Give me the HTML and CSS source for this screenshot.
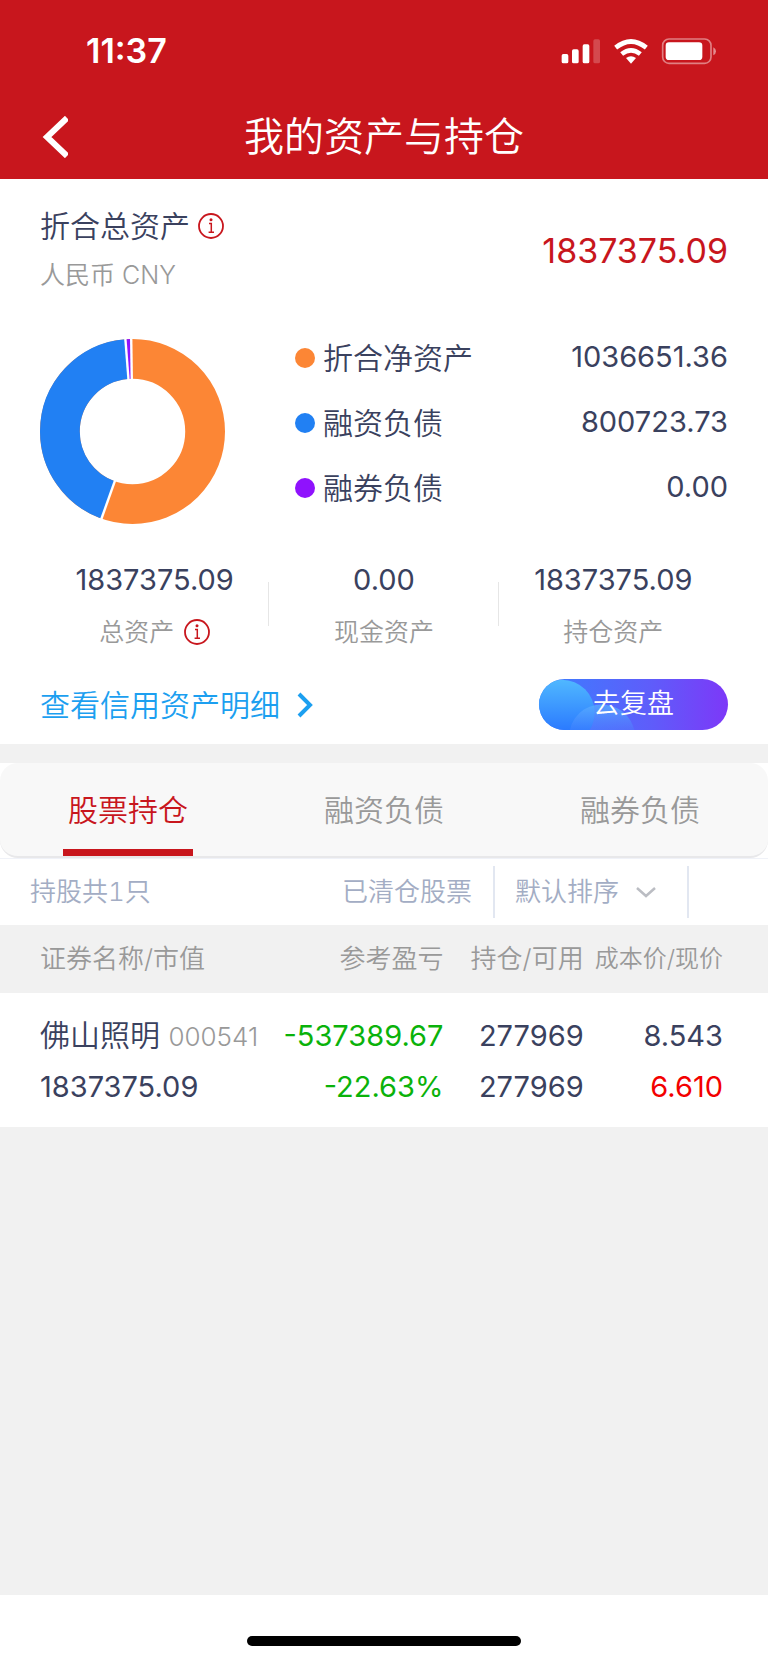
FILE: index.html
```html
<!DOCTYPE html>
<html lang="zh-CN">
<head>
<meta charset="utf-8">
<meta name="viewport" content="width=device-width, initial-scale=1">
<title>我的资产与持仓</title>
<link rel="stylesheet" href="styles.css">
</head>
<body>
<header class="top">
  <div class="status">
    <span class="status-time">11:37</span>
    <svg class="status-icons" viewBox="60 50 474 84" aria-hidden="true">
      <g fill="#fff">
        <rect x="65" y="101" width="20" height="28" rx="5"/>
        <rect x="96" y="87" width="20" height="42" rx="5"/>
        <rect x="128" y="72" width="20" height="57" rx="5"/>
        <rect x="160" y="57" width="20" height="72" rx="5" opacity=".22"/>
        <path d="M273 130 L258 113 Q273 102 288 113 Z"/>
        <rect x="377" y="66" width="110" height="53" rx="10"/>
      </g>
      <g fill="none" stroke="#fff" stroke-width="14">
        <path d="M245 101 Q273 79 301 101"/>
        <path d="M227 82 Q273 45 319 82"/>
      </g>
      <rect x="368" y="56" width="145" height="73" rx="19" fill="none" stroke="#fff" stroke-width="5" opacity=".45"/>
      <path d="M520 81 Q528 85 528 93 Q528 101 520 105 Z" fill="#fff" opacity=".5"/>
    </svg>
  </div>
  <div class="nav">
    <button class="back" type="button" aria-label="返回">
      <svg class="back-icon" viewBox="0 0 26 42" aria-hidden="true"><path d="M25 2 L5 21 L25 40" fill="none" stroke="#fff" stroke-width="6"/></svg>
    </button>
    <h1 class="title">我的资产与持仓</h1>
  </div>
</header>

<main class="main">
  <section class="assets">
    <div class="total">
      <div class="total-name">
        <div class="total-label">折合总资产
          <button class="info" type="button" aria-label="折合总资产说明">
            <svg class="info-icon" viewBox="0 0 26 26" aria-hidden="true"><circle cx="13" cy="13" r="12" fill="none" stroke="#c8161d" stroke-width="1.8"/><circle cx="13" cy="6.8" r="1.5" fill="#c8161d"/><path d="M11 10.5 H13.3 V19.3 M10.6 19.3 H16" fill="none" stroke="#c8161d" stroke-width="1.5"/></svg>
          </button>
        </div>
        <div class="currency">人民币 CNY</div>
      </div>
      <div class="total-value">1837375.09</div>
    </div>

    <div class="breakdown">
      <svg class="donut" viewBox="0 0 186 186" role="img" aria-label="资产构成">
        <g fill="none" stroke-width="40" transform="rotate(-90 93 93)">
          <circle cx="93" cy="93" r="73" stroke="#fc8635"/>
          <circle cx="93" cy="93" r="73" stroke="#2180f3" pathLength="360" stroke-dasharray="156 204" stroke-dashoffset="-199.6"/>
          <circle cx="93" cy="93" r="73" stroke="#8f12fd" pathLength="360" stroke-dasharray="3.6 356.4" stroke-dashoffset="-355.6"/>
        </g>
        <g stroke="#fff" stroke-width="2.4">
          <path d="M93 93 V-2" transform="rotate(-0.8 93 93)"/>
          <path d="M93 93 V-2" transform="rotate(-4.4 93 93)"/>
          <path d="M93 93 V-2" transform="rotate(199.6 93 93)"/>
        </g>
      </svg>
      <dl class="legend">
        <div class="legend-row"><dt class="legend-name net">折合净资产</dt><dd class="legend-value">1036651.36</dd></div>
        <div class="legend-row"><dt class="legend-name margin">融资负债</dt><dd class="legend-value">800723.73</dd></div>
        <div class="legend-row"><dt class="legend-name short">融券负债</dt><dd class="legend-value">0.00</dd></div>
      </dl>
    </div>

    <div class="stats">
      <div class="stat">
        <div class="stat-value">1837375.09</div>
        <div class="stat-label">总资产
          <button class="info" type="button" aria-label="总资产说明">
            <svg class="info-icon" viewBox="0 0 26 26" aria-hidden="true"><circle cx="13" cy="13" r="12" fill="none" stroke="#c8161d" stroke-width="1.8"/><circle cx="13" cy="6.8" r="1.5" fill="#c8161d"/><path d="M11 10.5 H13.3 V19.3 M10.6 19.3 H16" fill="none" stroke="#c8161d" stroke-width="1.5"/></svg>
          </button>
        </div>
      </div>
      <div class="stat">
        <div class="stat-value">0.00</div>
        <div class="stat-label">现金资产</div>
      </div>
      <div class="stat">
        <div class="stat-value">1837375.09</div>
        <div class="stat-label">持仓资产</div>
      </div>
    </div>

    <div class="actions">
      <a class="detail" href="#detail">查看信用资产明细
        <svg class="detail-icon" viewBox="0 0 16 26" aria-hidden="true"><path d="M2 2 L13 13 L2 24" fill="none" stroke="#1c9ff0" stroke-width="4"/></svg>
      </a>
      <button class="review" type="button">
        <svg class="review-art" viewBox="0 0 190 52" preserveAspectRatio="xMinYMid slice" aria-hidden="true">
          <defs>
            <linearGradient id="bubble" x1="0" y1="0" x2="0" y2="1"><stop offset="0" stop-color="#50b8ff"/><stop offset="1" stop-color="#2068ff"/></linearGradient>
            <linearGradient id="haze" x1="0" y1="0" x2="0" y2="1"><stop offset="0" stop-color="#58adff" stop-opacity=".8"/><stop offset="1" stop-color="#4e86ff" stop-opacity=".3"/></linearGradient>
          </defs>
          <circle cx="23" cy="34" r="33" fill="url(#bubble)"/>
          <path d="M31 52 A32 32 0 0 1 70 27 Q54 34 52 52 Z" fill="url(#haze)"/>
          <path d="M52 52 Q54 34 70 27 Q90 31 96 52 Z" fill="url(#haze)"/>
        </svg>
        <span class="review-text">去复盘</span>
      </button>
    </div>
  </section>

  <section class="holdings">
    <nav class="tabs">
      <a class="tab active" href="#stocks" aria-current="page">股票持仓</a>
      <a class="tab" href="#margin">融资负债</a>
      <a class="tab" href="#short">融券负债</a>
    </nav>
    <div class="filters">
      <span class="count">持股共1只</span>
      <a class="cleared" href="#cleared">已清仓股票</a>
      <button class="sort" type="button">默认排序
        <svg class="sort-icon" viewBox="0 0 22 12" aria-hidden="true"><path d="M2 2 L11 10 L20 2" fill="none" stroke="#bbbdc3" stroke-width="2.5"/></svg>
      </button>
    </div>
    <table class="table">
      <thead>
        <tr>
          <th class="c-name">证券名称/市值</th>
          <th class="c-profit">参考盈亏</th>
          <th class="c-amount">持仓/可用</th>
          <th class="c-price">成本价/现价</th>
        </tr>
      </thead>
      <tbody>
        <tr>
          <td class="c-name"><div class="name">佛山照明 <span class="code">000541</span></div><div>1837375.09</div></td>
          <td class="c-profit down"><div>-537389.67</div><div>-22.63%</div></td>
          <td class="c-amount"><div>277969</div><div>277969</div></td>
          <td class="c-price"><div>8.543</div><div class="up">6.610</div></td>
        </tr>
      </tbody>
    </table>
  </section>
</main>

<footer class="home"><div class="home-bar"></div></footer>
</body>
</html>
```

FILE: styles.css
```css
* {
  box-sizing: border-box;
  margin: 0;
  padding: 0;
}

body {
  display: flex;
  flex-direction: column;
  min-height: 100vh;
  background: #f1f1f1;
  color: #3a415e;
  font-family: Inter, "Noto Sans CJK SC", sans-serif;
  font-size: 30px;
  font-weight: 350;
  line-height: 1.2;
}

button {
  border: 0;
  background: none;
  color: inherit;
  font: inherit;
  cursor: pointer;
}

a {
  color: inherit;
  text-decoration: none;
}

svg {
  display: block;
  flex: none;
}

/* Header */
.top {
  background: #c8161d;
  color: #fff;
}

.status {
  display: flex;
  align-items: center;
  justify-content: space-between;
  height: 94px;
  padding: 8px 50px 0 86px;
}

.status-time {
  font-size: 34px;
  font-weight: 600;
}

.status-icons {
  width: 158px;
  height: 28px;
}

.nav {
  display: grid;
  grid-template-columns: 84px 1fr 84px;
  align-items: center;
  height: 85px;
}

.back {
  display: flex;
  padding-left: 42px;
}

.back-icon {
  width: 26px;
  height: 42px;
}

.title {
  font-size: 40px;
  font-weight: 350;
  text-align: center;
}

.main {
  flex: 1;
}

/* Asset summary */
.assets {
  padding: 24px 40px 14px;
  background: #fff;
}

.total {
  display: flex;
  align-items: center;
  justify-content: space-between;
}

.total-label {
  display: flex;
  align-items: center;
  gap: 8px;
  height: 46px;
}

.info {
  display: flex;
}

.info-icon {
  width: 26px;
  height: 26px;
}

.currency {
  height: 50px;
  color: #999;
  font-size: 25px;
  line-height: 52px;
}

.total-value {
  color: #c8161d;
  font-size: 34px;
  font-weight: 400;
}

.breakdown {
  display: flex;
  justify-content: space-between;
  margin-top: 40px;
}

.donut {
  width: 185px;
  height: 185px;
}

.legend {
  width: 433px;
  margin-top: -14px;
}

.legend-row {
  display: flex;
  align-items: center;
  justify-content: space-between;
  height: 65px;
}

.legend-name {
  display: flex;
  align-items: center;
  gap: 8px;
}

.legend-name::before {
  width: 20px;
  height: 20px;
  border-radius: 50%;
  background: currentColor;
  content: "";
}

.net::before {
  background: #fc8635;
}

.margin::before {
  background: #2180f3;
}

.short::before {
  background: #8f12fd;
}

.legend-value,
.stat-value {
  font-size: 29px;
  font-weight: 400;
}

.stats {
  display: grid;
  grid-template-columns: repeat(3, 1fr);
  margin-top: 34px;
}

.stat {
  display: flex;
  flex-direction: column;
  align-items: center;
  background: linear-gradient(#e6e6e6, #e6e6e6) no-repeat right 24px / 1px 44px;
}

.stat:last-child {
  background: none;
}

.stat-value {
  height: 44px;
  line-height: 44px;
}

.stat-label {
  display: flex;
  align-items: center;
  gap: 10px;
  height: 60px;
  color: #999;
  font-size: 25px;
}

.actions {
  display: flex;
  align-items: center;
  justify-content: space-between;
  margin-top: 17px;
}

.detail {
  display: flex;
  align-items: center;
  gap: 17px;
  color: #1c9ff0;
}

.detail-icon {
  width: 16px;
  height: 26px;
}

.review {
  display: grid;
  width: 189px;
  height: 51px;
  overflow: hidden;
  border-radius: 26px;
  background: linear-gradient(90deg, #3a80ff, #5f5cfa 60%, #7d38f8);
  color: #fff;
  font-size: 27px;
}

.review-art,
.review-text {
  grid-area: 1 / 1;
}

.review-art {
  width: 100%;
  height: 100%;
}

.review-text {
  align-self: center;
}

/* Holdings */
.holdings {
  margin-top: 19px;
  background: #fff;
}

.tabs {
  display: grid;
  grid-template-columns: repeat(3, 1fr);
  justify-items: center;
  height: 95px;
  border-bottom: 2px solid #e8e8ea;
  border-radius: 18px;
  background: #f8f8f8;
  color: #999;
}

.tab {
  display: flex;
  align-items: center;
  padding: 7px 5px 0;
  border-bottom: 7px solid transparent;
}

.active {
  border-color: #c8161d;
  color: #c8161d;
}

.filters {
  display: flex;
  align-items: center;
  height: 67px;
  padding: 0 79px 0 30px;
  border-top: 1px solid #f0f2f8;
  color: #a3adc4;
  font-size: 26px;
}

.count {
  font-variant-numeric: tabular-nums;
}

.cleared {
  margin-left: auto;
  padding-right: 21px;
}

.sort {
  display: flex;
  align-items: center;
  gap: 16px;
  height: 52px;
  padding: 0 30px 0 20px;
  border: solid #e2e7f1;
  border-width: 0 2px;
}

.sort-icon {
  width: 22px;
  height: 12px;
}

.table {
  width: 100%;
  border-collapse: collapse;
  table-layout: fixed;
}

.table th {
  height: 68px;
  background: #f1f1f1;
  color: #999;
  font-size: 26px;
  font-weight: 350;
  white-space: nowrap;
}

.table td {
  padding: 17px 0 15px;
  font-size: 29px;
  font-weight: 400;
  line-height: 51px;
  vertical-align: top;
  white-space: nowrap;
}

.table .c-name {
  width: 34%;
  padding-left: 40px;
  text-align: left;
}

.table .c-profit {
  width: 24%;
  padding-right: 2px;
  text-align: right;
}

.table .c-amount {
  width: 18%;
  text-align: right;
}

.table .c-price {
  width: 24%;
  padding-right: 45px;
  text-align: right;
}

.table th.c-price {
  font-size: 24px;
}

.name {
  font-size: 30px;
  font-weight: 350;
}

.code {
  color: #999;
  font-size: 26px;
  line-height: 1;
}

.down {
  color: #0ab20a;
}

.up {
  color: #f30000;
}

.home {
  display: flex;
  justify-content: center;
  height: 68px;
  padding-top: 41px;
  background: #fff;
}

.home-bar {
  width: 274px;
  height: 10px;
  border-radius: 5px;
  background: #000;
}
```
